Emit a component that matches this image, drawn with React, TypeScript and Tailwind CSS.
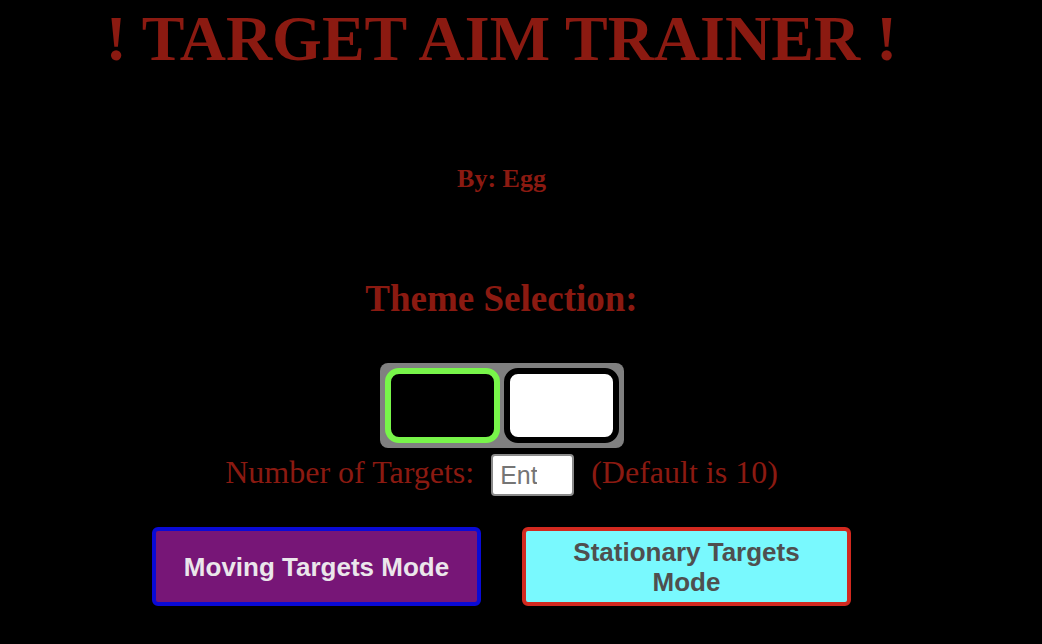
import { useState } from "react";

const SERIF = "font-['Liberation_Serif',serif]";
const SANS = "font-['Liberation_Sans',Arial,sans-serif]";

export default function App() {
  const [theme, setTheme] = useState<"dark" | "light">("dark");
  const [count, setCount] = useState("");

  return (
    <div className="min-h-[644px] w-full bg-black">
      <div className={`flex w-[1003px] flex-col items-center text-[#8b1a11] ${SERIF}`}>
        {/* Title */}
        <h1 className="mt-[7px] text-[64px] font-bold leading-none whitespace-nowrap">
          ! TARGET AIM TRAINER !
        </h1>

        <p className="mt-[95px] text-[26px] font-bold leading-none">By: Egg</p>

        <h2 className="mt-[88px] text-[37px] font-bold leading-none">
          Theme Selection:
        </h2>

        {/* Theme toggle */}
        <div className="mt-[46px] flex gap-[4px] rounded-[8px] bg-[#808080] p-[5px]">
          <button
            onClick={() => setTheme("dark")}
            className={`h-[75px] w-[115px] rounded-[14px] border-[6px] bg-black ${
              theme === "dark" ? "border-[#78f54a]" : "border-black"
            }`}
          />
          <button
            onClick={() => setTheme("light")}
            className={`h-[75px] w-[115px] rounded-[14px] border-[6px] bg-white ${
              theme === "light" ? "border-[#78f54a]" : "border-black"
            }`}
          />
        </div>

        {/* Target count */}
        <div className="mt-[6px] flex h-[42px] items-start gap-[17px] text-[32px]">
          <span className="leading-[36px] whitespace-nowrap">Number of Targets:</span>
          <input
            value={count}
            onChange={(e) => setCount(e.target.value)}
            placeholder="Enter a number"
            className={`h-[42px] w-[83px] rounded-[4px] border-2 border-[#8a8a8a] bg-white pl-[7px] pr-[35px] text-[25px] text-black placeholder:text-[#757575] ${SANS}`}
          />
          <span className="leading-[36px] whitespace-nowrap">(Default is 10)</span>
        </div>

        {/* Modes */}
        <div className={`mt-[31px] flex gap-[41px] ${SANS}`}>
          <button className="h-[79px] w-[329px] rounded-[6px] border-4 border-[#0a0ad6] bg-[#771677] px-4 text-[26px] leading-[30px] font-bold text-[#ebe6eb]">
            Moving Targets Mode
          </button>
          <button className="h-[79px] w-[329px] rounded-[6px] border-4 border-[#d2291f] bg-[#79f9fe] px-4 text-[26px] leading-[30px] font-bold text-[#4f4f4f]">
            Stationary Targets Mode
          </button>
        </div>
      </div>
    </div>
  );
}
